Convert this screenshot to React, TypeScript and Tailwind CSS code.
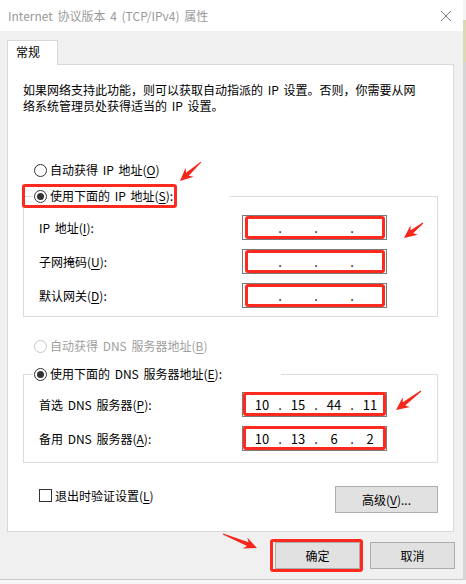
import { Fragment } from 'react';

function Radio({ checked, disabled }: { checked?: boolean; disabled?: boolean }) {
  return (
    <span
      className={
        disabled
          ? 'w-[13px] h-[13px] rounded-full border border-[#c8c8c8] bg-white flex items-center justify-center shrink-0'
          : 'w-[13px] h-[13px] rounded-full border border-[#333333] bg-white flex items-center justify-center shrink-0'
      }
    >
      {checked && <span className="w-[7px] h-[7px] rounded-full bg-[#333333]" />}
    </span>
  );
}

function U({ c }: { c: string }) {
  return <span className="underline underline-offset-[2px] decoration-[1px]">{c}</span>;
}

function IpBox({ parts, dns }: { parts?: string[]; dns?: boolean }) {
  const segs = parts ?? ['', '', '', ''];
  return (
    <div className="relative w-[145px] h-[25px] border border-[#7a7a7a] bg-white flex items-center pl-[3px] text-[13px] [word-spacing:0px]">
      {segs.map((p, i) => (
        <Fragment key={i}>
          <span className="w-[32px] text-center">{p}</span>
          {i < 3 && <span className="w-[4px] text-center">.</span>}
        </Fragment>
      ))}
      {dns ? (
        <div className="absolute left-[0px] right-[0px] top-[-1px] bottom-[0px] border-[3px] border-[#ff2a1f] rounded-[3px]" />
      ) : (
        <div className="absolute left-[2px] right-[1px] top-[0px] bottom-[0px] border-[3px] border-[#ff2a1f] rounded-[3px]" />
      )}
    </div>
  );
}

function Row({ label, children }: { label: React.ReactNode; children: React.ReactNode }) {
  return (
    <div className="flex items-center h-[25px]">
      <div className="w-[203px] shrink-0">{label}</div>
      {children}
    </div>
  );
}

function arrowPoints(x1: number, y1: number, x2: number, y2: number) {
  const dx = x2 - x1;
  const dy = y2 - y1;
  const L = Math.hypot(dx, dy);
  const ux = dx / L;
  const uy = dy / L;
  const nx = -uy;
  const ny = ux;
  const hl = 12;
  const hw = 6;
  const sw = 2;
  const tw = 0.5;
  const p = (t: number, s: number) => `${(x1 + ux * t + nx * s).toFixed(2)},${(y1 + uy * t + ny * s).toFixed(2)}`;
  return [p(0, tw), p(L - hl + 2, sw), p(L - hl - 1, hw), p(L, 0), p(L - hl - 1, -hw), p(L - hl + 2, -sw), p(0, -tw)].join(' ');
}

export default function App() {
  const arrows: [number, number, number, number][] = [
    [201, 162, 180, 181],
    [423, 223, 404, 238],
    [421, 391, 396, 410],
    [223, 534, 257, 548],
  ];
  return (
    <div className="relative w-[466px] h-[584px] bg-[#f7f7f7] overflow-hidden font-['Noto_Sans_CJK_SC','Microsoft_YaHei',sans-serif] text-[12px] leading-[16px] text-black [word-spacing:2px]">
      <div className="flex h-[580px]">
        {/* window */}
        <div className="w-[463px] h-[580px] flex flex-col border-b border-[#c9c9c9]">
          <div className="h-[31px] bg-white flex items-center justify-between pl-[8px] pr-[10px] shrink-0">
            <span className="text-[#9a9a9a] text-[12px]">Internet 协议版本 4 (TCP/IPv4) 属性</span>
            <svg width="12" height="12" viewBox="0 0 12 12" className="mr-[1px]">
              <path d="M1 1 L11 11 M11 1 L1 11" stroke="#7a7a7a" strokeWidth="1" />
            </svg>
          </div>
          <div className="flex-1 bg-[#f0f0f0] pt-[9px] pl-[7px] pr-[8px] flex flex-col">
            {/* tab */}
            <div className="w-[51px] h-[25px] bg-white border border-b-0 border-[#d9d9d9] pl-[8px] pt-[3px] relative z-10 mb-[-1px]">
              常规
            </div>
            {/* panel */}
            <div className="w-[447px] h-[468px] bg-white border border-[#d9d9d9] flex flex-col pt-[17px] pl-[15px] pr-[15px]">
              <p>
                如果网络支持此功能，则可以获取自动指派的 IP 设置。否则，你需要从网
                <br />
                络系统管理员处获得适当的 IP 设置。
              </p>
              <div className="mt-[48px] h-[16px] flex items-center gap-[3px] pl-[11px]">
                <Radio />
                <span>
                  自动获得 IP 地址(<U c="O" />)
                </span>
              </div>
              {/* group 1 */}
              <div className="relative mt-[18px] border border-[#dcdcdc] pt-[18px] pb-[8px] pl-[15px] flex flex-col gap-[9px]">
                <div className="absolute left-[9px] top-[-9px] w-[197px] h-[16px] bg-white flex items-center gap-[3px] pl-[1px]">
                  <Radio checked />
                  <span>
                    使用下面的 IP 地址(<U c="S" />):
                  </span>
                  <div className="absolute left-[-11px] top-[-4px] w-[155px] h-[24px] border-[3px] border-[#ff2a1f] rounded-[3px]" />
                </div>
                <Row label={<>IP 地址(<U c="I" />):</>}>
                  <IpBox />
                </Row>
                <Row label={<>子网掩码(<U c="U" />):</>}>
                  <IpBox />
                </Row>
                <Row label={<>默认网关(<U c="D" />):</>}>
                  <IpBox />
                </Row>
              </div>
              <div className="mt-[21px] h-[16px] flex items-center gap-[3px] pl-[11px] text-[#a0a0a0]">
                <Radio disabled />
                <span>
                  自动获得 DNS 服务器地址(<U c="B" />)
                </span>
              </div>
              {/* group 2 */}
              <div className="relative mt-[20px] border border-[#dcdcdc] pt-[17px] pb-[11px] pl-[15px] flex flex-col gap-[9px]">
                <div className="absolute left-[9px] top-[-9px] w-[248px] h-[16px] bg-white flex items-center gap-[3px] pl-[1px]">
                  <Radio checked />
                  <span>
                    使用下面的 DNS 服务器地址(<U c="E" />):
                  </span>
                </div>
                <Row label={<>首选 DNS 服务器(<U c="P" />):</>}>
                  <IpBox dns parts={['10', '15', '44', '11']} />
                </Row>
                <Row label={<>备用 DNS 服务器(<U c="A" />):</>}>
                  <IpBox dns parts={['10', '13', '6', '2']} />
                </Row>
              </div>
              <div className="mt-[23px] flex items-start justify-between">
                <div className="flex items-center gap-[3px] pl-[16px] pt-[1px] h-[16px] mt-[1px]">
                  <span className="w-[13px] h-[13px] border border-[#333333] bg-white shrink-0" />
                  <span>
                    退出时验证设置(<U c="L" />)
                  </span>
                </div>
                <button className="w-[103px] h-[27px] bg-[#e1e1e1] border border-[#adadad] flex items-center justify-center">
                  高级(<U c="V" />)...
                </button>
              </div>
            </div>
            {/* bottom buttons */}
            <div className="mt-[10px] flex justify-end gap-[10px]">
              <div className="relative">
                <button className="w-[85px] h-[27px] bg-[#e1e1e1] border border-[#adadad] flex items-center justify-center">
                  确定
                </button>
                <div className="absolute left-[-5px] right-[-3px] top-[-3px] bottom-[-3px] border-[3px] border-[#ff2a1f] rounded-[3px]" />
              </div>
              <button className="w-[85px] h-[27px] bg-[#e1e1e1] border border-[#adadad] flex items-center justify-center">
                取消
              </button>
            </div>
          </div>
        </div>
        {/* background strip at right */}
        <div className="w-[3px] flex flex-col">
          <div className="h-[20px] bg-[#f4f4f4]" />
          <div className="h-[42px] bg-[#ddd8b4]" />
          <div className="flex-1 bg-[#d6d6d6]" />
        </div>
      </div>
      <svg className="absolute inset-0 pointer-events-none" width="466" height="584" viewBox="0 0 466 584">
        {arrows.map(([a, b, c, d], i) => (
          <polygon key={i} points={arrowPoints(a, b, c, d)} fill="#f5261b" />
        ))}
      </svg>
    </div>
  );
}
